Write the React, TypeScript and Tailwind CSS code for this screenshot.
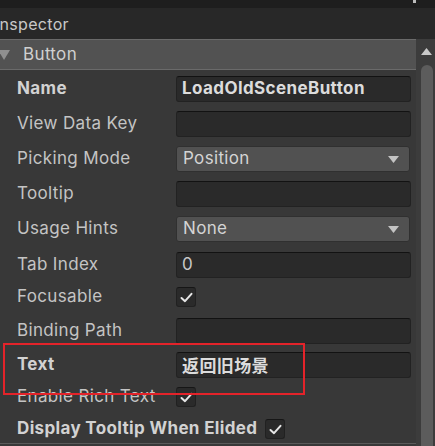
import React from "react";

type Row =
  | { label: string; kind: "text"; value?: string; bold?: boolean; h: string; cjk?: boolean }
  | { label: string; kind: "dropdown"; value: string; h: string }
  | { label: string; kind: "check"; bold?: boolean; h: string; inline?: boolean };

const rows: Row[] = [
  { label: "Name", kind: "text", value: "LoadOldSceneButton", bold: true, h: "h-[37px]" },
  { label: "View Data Key", kind: "text", h: "h-[34px]" },
  { label: "Picking Mode", kind: "dropdown", value: "Position", h: "h-[36px]" },
  { label: "Tooltip", kind: "text", h: "h-[34px]" },
  { label: "Usage Hints", kind: "dropdown", value: "None", h: "h-[36px]" },
  { label: "Tab Index", kind: "text", value: "0", h: "h-[36px]" },
  { label: "Focusable", kind: "check", h: "h-[28px]" },
  { label: "Binding Path", kind: "text", h: "h-[40px]" },
  { label: "Text", kind: "text", value: "返回旧场景", bold: true, h: "h-[28px]", cjk: true },
  { label: "Enable Rich Text", kind: "check", h: "h-[36px]" },
  { label: "Display Tooltip When Elided", kind: "check", bold: true, h: "h-[28px]", inline: true },
];

const Check = () => (
  <div className="w-[20px] h-[20px] rounded-[3px] bg-[#2a2a2a] border border-[#212121] border-t-[#161616] flex items-center justify-center">
    <svg width="13" height="11" viewBox="0 0 13 11">
      <path d="M1.5 6 L5 9.2 L11.5 1.8" fill="none" stroke="#e6e6e6" strokeWidth="2" strokeLinecap="round" strokeLinejoin="round" />
    </svg>
  </div>
);

const Field = ({ row }: { row: Row }) => {
  if (row.kind === "dropdown") {
    return (
      <div className="w-[234px] h-[26px] rounded-[3px] bg-[#515151] border border-[#303030] flex items-center justify-between pl-[6px] pr-[10px]">
        <span className="text-[17px] tracking-[0.35px] text-[#d4d4d4]">{row.value}</span>
        <svg width="11" height="7" viewBox="0 0 11 7">
          <path d="M0 0 H11 L5.5 7 Z" fill="#c4c4c4" />
        </svg>
      </div>
    );
  }
  if (row.kind === "check") return <Check />;
  return (
    <div className="w-[235px] h-[26px] rounded-[3px] bg-[#2a2a2a] border border-[#222222] border-t-[#121212] flex items-center px-[5px]">
      {row.value && (
        <span
          className={`text-[17px] ${row.bold ? "font-bold text-[#dcdcdc] tracking-[0.4px]" : "text-[#c8c8c8]"}`}
          style={row.cjk ? { fontFamily: "'Noto Sans CJK SC', sans-serif" } : undefined}
        >
          {row.value}
        </span>
      )}
    </div>
  );
};

export default function App() {
  return (
    <div className="w-[435px] h-[446px] overflow-hidden bg-[#383838] flex flex-col font-['Inter',sans-serif] relative">
      <div className="h-[8px] bg-[#1e1e1e] flex justify-end pr-[19px] shrink-0">
        <div className="w-[3px] h-[3px] bg-[#bdbdbd]" />
      </div>
      <div className="h-[31px] bg-[#282828] flex items-center shrink-0">
        <span className="text-[16px] tracking-[0.3px] text-[#c8c8c8] -ml-[5px]">Inspector</span>
      </div>
      <div className="flex flex-1 min-h-0">
        <div className="w-[416px] flex flex-col">
          <div className="h-[31px] bg-[#525252] border-t border-b border-[#6a6a6a] flex items-center shrink-0">
            <svg width="12" height="10" viewBox="0 0 12 10" className="-ml-[2px]">
              <path d="M0 0 H12 L6 10 Z" fill="#8f8f8f" />
            </svg>
            <span className="ml-[13px] text-[17px] tracking-[0.35px] text-[#d0d0d0]">Button</span>
          </div>
          {rows.map((row) => (
            <div key={row.label} className={`${row.h} flex items-center shrink-0 pl-[17px]`}>
              <span
                className={`text-[17px] tracking-[0.35px] ${
                  row.bold ? "font-bold text-[#d2d2d2]" : "text-[#c4c4c4]"
                } ${row.kind === "check" && row.inline ? "mr-[8px]" : "w-[159px]"} whitespace-nowrap`}
              >
                {row.label}
              </span>
              <Field row={row} />
            </div>
          ))}
          <div className="h-[1px] bg-[#5a5a5a] shrink-0" />
        </div>
        <div className="w-[19px] bg-[#3c3c3c] flex flex-col items-center pt-[9px]">
          <svg width="11" height="7" viewBox="0 0 11 7" className="ml-[2px]">
            <path d="M0 7 H11 L5.5 0 Z" fill="#c8c8c8" />
          </svg>
          <div className="mt-[10px] ml-[2px] w-[12px] flex-1 rounded-t-[6px] bg-[#5c5c5c]" />
        </div>
      </div>
      <div className="absolute left-[3px] top-[343px] w-[302px] h-[52px] border-2 border-[#e4232a] pointer-events-none" />
    </div>
  );
}
